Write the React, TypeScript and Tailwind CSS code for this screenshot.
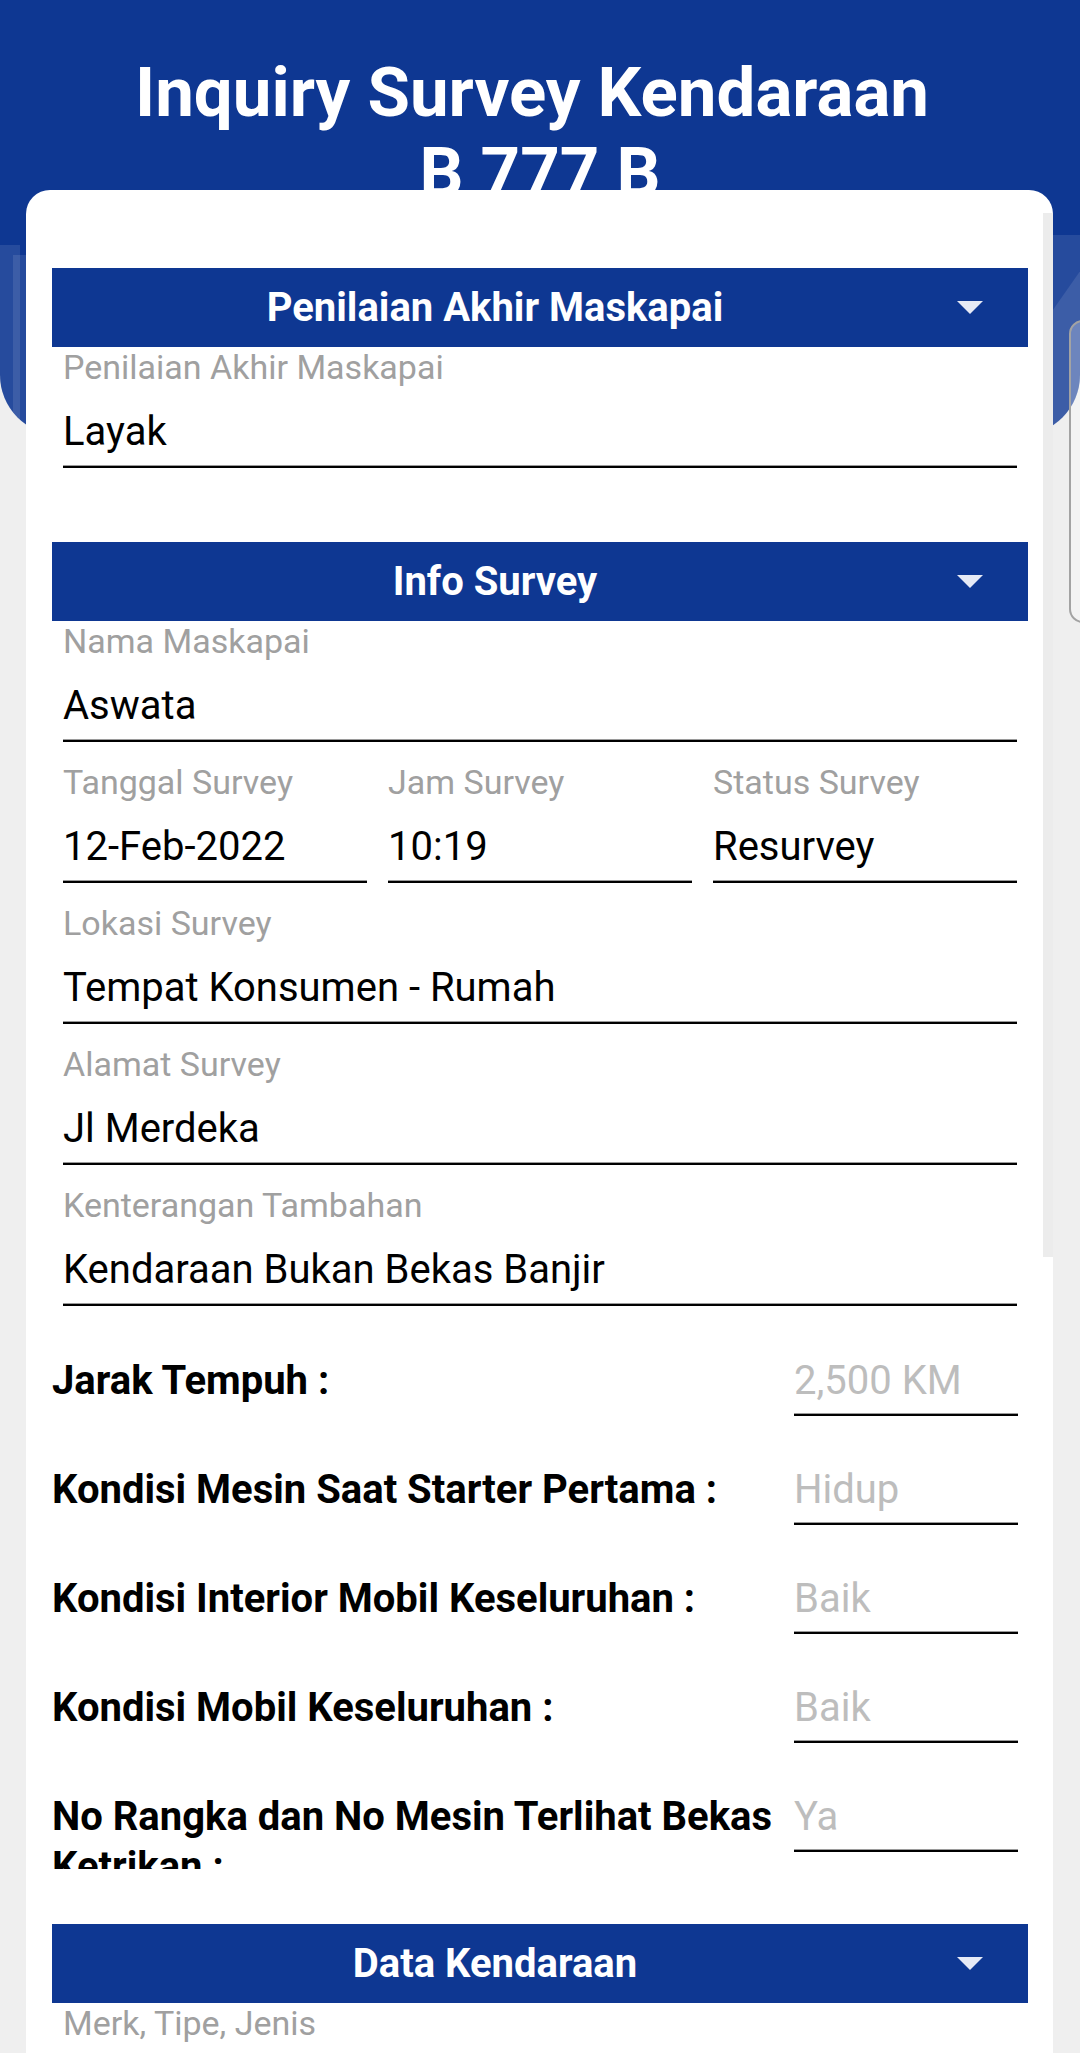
import React from "react";

function Triangle() {
  return (
    <svg width="26" height="13" viewBox="0 0 26 13">
      <polygon points="0,0 26,0 13,13" fill="#e6eaf6" />
    </svg>
  );
}

function Bar({ title, className = "" }: { title: string; className?: string }) {
  return (
    <div className={"flex h-[79px] items-center bg-[#0e3792] text-white " + className}>
      <span className="flex-1 text-center text-[40px] font-bold leading-none">{title}</span>
      <span className="flex w-[90px] pl-[19px]">
        <Triangle />
      </span>
    </div>
  );
}

function Underline() {
  return <div className="h-[3px] border-t border-[#9a9a9a] bg-black" />;
}

function Field({ label, value, className = "" }: { label: string; value: string; className?: string }) {
  return (
    <div className={className}>
      <div className="h-[40px] whitespace-nowrap text-[34px] leading-[40px] text-[#a0a0a0]">{label}</div>
      <div className="whitespace-nowrap pb-[11px] pt-[23px] text-[40px] leading-[44px] text-black">{value}</div>
      <Underline />
    </div>
  );
}

function Row({ label, value }: { label: string; value: string }) {
  return (
    <div className="flex items-start pr-[10px]">
      <div className="h-[77px] flex-1 overflow-hidden pr-[14px] text-[40px] font-bold leading-[50px] text-black">
        {label}
      </div>
      <div className="w-[224px]">
        <div className="h-[50px] whitespace-nowrap text-[40px] leading-[50px] text-[#bdbdbd]">{value}</div>
        <div className="mt-[7px]">
          <Underline />
        </div>
      </div>
    </div>
  );
}

export default function App() {
  return (
    <div
      className="relative min-h-[2053px] w-[1080px] overflow-hidden bg-[#efefef]"
      style={{ fontFamily: "Roboto, 'Noto Sans', sans-serif" }}
    >
      {/* Header */}
      <div className="relative h-[435px] overflow-hidden rounded-b-[60px] bg-[#0e3792]">
        <div className="absolute left-[-380px] top-[245px] h-[420px] w-[400px] bg-white/10" />
        <div className="absolute left-[13px] top-[255px] h-[300px] w-[40px] bg-white/10" />
        <div className="absolute left-[1040px] top-[150px] h-[420px] w-[200px] rotate-[35deg] bg-white/10" />
        <div className="absolute left-[1045px] top-[235px] h-[300px] w-[120px] bg-white/10" />
        <div className="relative pt-[53px] text-center text-[69px] font-bold leading-[80px] text-white">
          <div className="pr-[16px]">Inquiry Survey Kendaraan</div>
          <div>B 777 B</div>
        </div>
      </div>

      {/* side outline (background panel) */}
      <div className="absolute left-[1069px] top-[320px] h-[303px] w-[60px] rounded-[14px] border-2 border-[#a3a3a3] bg-white/25" />

      {/* Card */}
      <div className="relative z-10 -mt-[245px] ml-[26px] w-[1027px] rounded-t-[24px] bg-white pb-[40px] pl-[26px] pr-[25px] pt-[78px]">
        <div className="absolute right-0 top-[23px] h-[1044px] w-[10px] bg-[#ececec]" />

        <Bar title="Penilaian Akhir Maskapai" />
        <div className="px-[11px]">
          <Field label="Penilaian Akhir Maskapai" value="Layak" />
        </div>

        <Bar title="Info Survey" className="mt-[74px]" />
        <div className="flex flex-col gap-[20px] px-[11px]">
          <Field label="Nama Maskapai" value="Aswata" />
          <div className="grid grid-cols-3 gap-x-[21px]">
            <Field label="Tanggal Survey" value="12-Feb-2022" />
            <Field label="Jam Survey" value="10:19" />
            <Field label="Status Survey" value="Resurvey" />
          </div>
          <Field label="Lokasi Survey" value="Tempat Konsumen - Rumah" />
          <Field label="Alamat Survey" value="Jl Merdeka" />
          <Field label="Kenterangan Tambahan" value="Kendaraan Bukan Bekas Banjir" />
        </div>

        <div className="mt-[50px] flex flex-col gap-[32px]">
          <Row label="Jarak Tempuh :" value="2,500 KM" />
          <Row label="Kondisi Mesin Saat Starter Pertama :" value="Hidup" />
          <Row label="Kondisi Interior Mobil Keseluruhan :" value="Baik" />
          <Row label="Kondisi Mobil Keseluruhan :" value="Baik" />
          <Row label="No Rangka dan No Mesin Terlihat Bekas Ketrikan :" value="Ya" />
        </div>

        <Bar title="Data Kendaraan" className="mt-[55px]" />
        <div className="px-[11px]">
          <div className="h-[40px] whitespace-nowrap text-[34px] leading-[40px] text-[#a0a0a0]">Merk, Tipe, Jenis</div>
        </div>
      </div>
    </div>
  );
}
